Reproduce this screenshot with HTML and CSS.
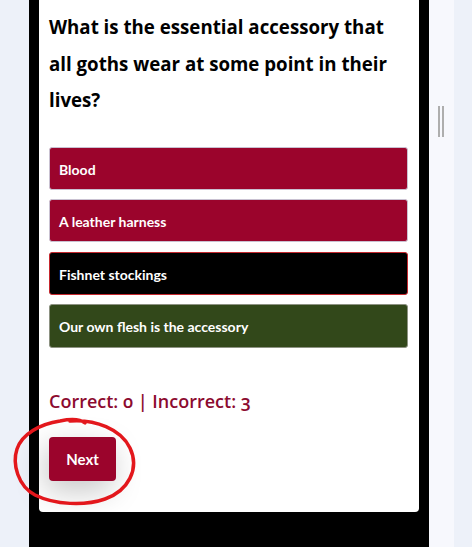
FILE: index.html
```html
<!DOCTYPE html>
<html>
<head>
<meta charset="utf-8">
<link rel="stylesheet" href="styles.css">
</head>
<body>
<div class="page">
  <div class="strip-left"></div>
  <div class="column">
    <div class="card">
      <h2 class="question">What is the essential accessory that all goths wear at some point in their lives?</h2>
      <div class="options">
        <div class="option wrong">Blood</div>
        <div class="option wrong">A leather harness</div>
        <div class="option selected">Fishnet stockings</div>
        <div class="option correct">Our own flesh is the accessory</div>
      </div>
      <div class="score">Correct: 0 | Incorrect: 3</div>
      <div class="actions">
        <button class="next">Next</button>
        <svg class="scribble" width="140" height="100" viewBox="10 415 140 100">
          <path d="M 70 422 C 95 420, 121 430, 130 449 C 140 470, 128 492, 105 500 C 85 507, 55 506, 35 496 C 18 487, 12 465, 17 450 C 22 435, 40 425, 60 422 C 70 420, 80 420, 85 424" fill="none" stroke="#e3171c" stroke-width="3.5" stroke-linecap="round"/>
        </svg>
      </div>
    </div>
  </div>
  <div class="panel">
    <div class="grip"><span></span><span></span></div>
  </div>
  <div class="strip-right"></div>
</div>
</body>
</html>
```
FILE: styles.css
```css
html, body {
  margin: 0;
  padding: 0;
  height: 100%;
  overflow: hidden;
}
body {
  font-family: Lato, "Open Sans", sans-serif;
}
.page {
  display: flex;
  height: 547px;
  background: #edf1f9;
}
.strip-left {
  width: 29px;
  background: #edf1f9;
}
.column {
  width: 380px;
  padding: 0 10px;
  background: #000;
}
.card {
  background: #fff;
  border-radius: 0 0 4px 4px;
  padding: 9px 11px 31px 10px;
  box-shadow: 0 1px 1px rgba(0,0,0,0.15);
}
.question {
  margin: 0;
  font-family: "Open Sans", sans-serif;
  font-size: 18.7px;
  line-height: 36.5px;
  font-weight: 700;
  color: #000;
}
.options {
  margin-top: 28px;
  display: flex;
  flex-direction: column;
  gap: 9.3px;
}
.option {
  box-sizing: border-box;
  height: 43.3px;
  display: flex;
  align-items: center;
  padding: 2px 9px 0;
  border-radius: 3px;
  font-size: 14px;
  font-weight: 700;
  color: #fff;
  border: 1px solid #c9c1d1;
}
.option.wrong {
  background: #9b042c;
}
.option.selected {
  background: #000;
  border-color: #c5282e;
}
.option.correct {
  background: #32481a;
  border-color: #8d9282;
}
.score {
  margin-top: 41px;
  font-family: "Open Sans", sans-serif;
  font-weight: 600;
  font-size: 18px;
  font-variant-numeric: oldstyle-nums;
  color: #8c0a2f;
}
.actions {
  position: relative;
  margin-top: 24px;
}
.next {
  width: 67px;
  height: 44px;
  border: none;
  border-radius: 4px;
  background: #9b042c;
  color: #fff;
  font-family: Lato, sans-serif;
  font-weight: 700;
  font-size: 15px;
  box-shadow: -4px 10px 30px rgba(0,0,0,0.22);
  padding: 0;
}
.scribble {
  position: absolute;
  left: -39px;
  top: -23px;
  pointer-events: none;
}
.panel {
  width: 25px;
  background: #f7f8fd;
  position: relative;
}
.grip {
  display: flex;
  gap: 2px;
  margin: 106px 0 0 9px;
}
.grip span {
  display: block;
  width: 2px;
  height: 31px;
  background: #aeaeae;
}
.strip-right {
  flex: 1;
  background: #edf1f9;
}
```
